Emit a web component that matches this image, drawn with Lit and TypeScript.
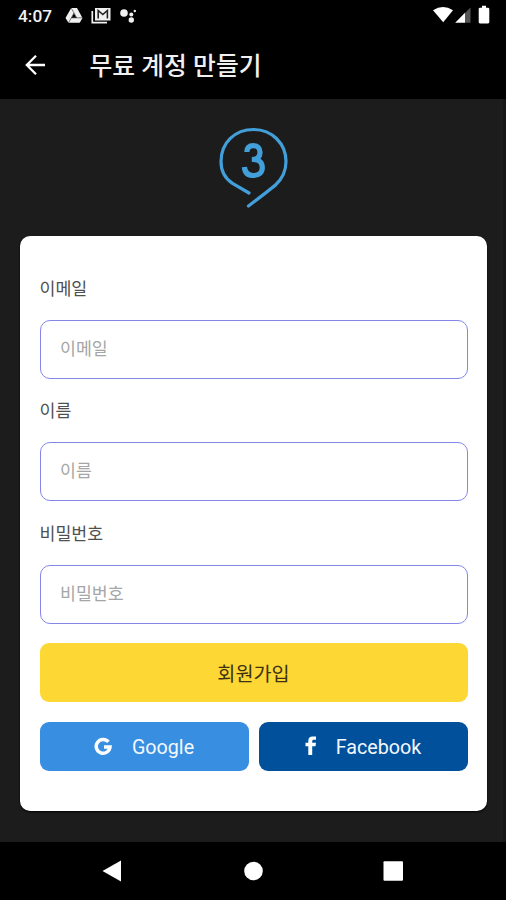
import { LitElement, html, css } from "lit";
import { customElement } from "lit/decorators.js";

const fields = [
  { label: "이메일", type: "email" },
  { label: "이름", type: "text" },
  { label: "비밀번호", type: "password" },
];

@customElement("app-root")
export class AppRoot extends LitElement {
  static styles = css`
    :host {
      display: flex;
      flex-direction: column;
      height: 900px;
      overflow: hidden;
      background: #1c1c1c;
      font-family: Roboto, "Noto Sans CJK KR", sans-serif;
    }
    * { box-sizing: border-box; }
    svg { display: block; flex: none; }
    .status {
      height: 32px;
      flex: none;
      background: #000;
      color: #f2f2f2;
      display: flex;
      justify-content: space-between;
    }
    .status-left { display: flex; padding-left: 18px; }
    .time { width: 47px; font-size: 17.3px; font-weight: 500; line-height: 33px; }
    .appbar {
      height: 67px;
      flex: none;
      background: #000;
      display: flex;
      align-items: center;
      padding-left: 24px;
      gap: 43.5px;
    }
    h1 {
      margin: 0;
      color: #f0f0f0;
      font-size: 24.8px;
      font-weight: 500;
      line-height: 36px;
      white-space: nowrap;
      padding-top: 2px;
    }
    .arrow { margin-bottom: 2px; }
    main {
      flex: 1;
      min-height: 0;
      padding: 27px 16px 0 20px;
      border-right: 3px solid #161616;
    }
    .logo { margin: 0 auto 26px 197px; }
    form {
      height: 575px;
      margin: 0;
      background: #fff;
      border-radius: 10px;
      padding: 38px 19.5px 0;
      box-shadow: 0 1px 2px #000;
    }
    .field { display: block; height: 122.5px; }
    .label { display: block; height: 45.5px; font-size: 17.3px; line-height: 26px; padding-top: 1.5px; color: #505050; }
    input {
      display: block;
      width: 100%;
      height: 59px;
      border: 1.4px solid #8587e8;
      border-radius: 10px;
      background: #fff;
      padding: 0 19.5px 1px;
      font: 17.3px Roboto, "Noto Sans CJK KR", sans-serif;
      outline: none;
    }
    input::placeholder { color: #a6a6a6; opacity: 1; }
    button {
      border: 0;
      padding: 0;
      border-radius: 9px;
      font-family: inherit;
      display: flex;
      align-items: center;
      justify-content: center;
    }
    .submit {
      width: 100%;
      height: 59px;
      margin-top: 1.5px;
      background: #fdd835;
      color: #3c3213;
      font-size: 19.7px;
    }
    .social { display: grid; grid-template-columns: 1fr 1fr; gap: 10px; margin-top: 20px; }
    .social button { height: 49px; color: #f4f8ff; font-size: 19.7px; padding-top: 1px; }
    .google { background: #388ee0; gap: 19px; }
    .google svg { margin-bottom: 2px; }
    .facebook { background: #00509c; gap: 19px; }
    .facebook svg { margin-bottom: 3px; }
    .nav { height: 58px; flex: none; background: #000; }
  `;

  render() {
    return html`
      <div class="status">
        <div class="status-left">
          <span class="time">4:07</span>
          <svg width="75" height="32" viewBox="65 0 75 32" fill="#f0f0f0">
            <path d="M71.200 8h5.800l5.500 10-2.800 4.800H68.500L65.500 18z" />
            <path d="M74 13.500l2.400 4.300H71.600z" fill="#000" />
            <path d="M71.200 8l5.500 9.800M74 13l-5.500 9.800M71.300 17.800h11.200" stroke="#000" stroke-width=".5" fill="none" />
            <path d="M92.300 11v11.700H107" fill="none" stroke="#f0f0f0" stroke-width="1.700" />
            <path d="M95 8h15.500v12.500H95z" />
            <path d="M98.200 18.500v-8l4.600 4 4.600-4v8" fill="none" stroke="#222" stroke-width="1.600" />
            <circle cx="124" cy="13" r="3.800" />
            <circle cx="131.300" cy="14.500" r="2" />
            <circle cx="131.300" cy="20" r="2.700" />
            <circle cx="134.800" cy="11" r="1.200" />
          </svg>
        </div>
        <svg width="86" height="32" viewBox="420 0 86 32" fill="#fff">
          <path d="M433 10.300Q443 3.500 453 10.300L443.200 22.300z" />
          <path d="M470.500 7.500v15.300H465V13z" fill="#555" />
          <path d="M465 12.800v10H455.200z" />
          <path d="M482 7.800v-2h4v2h2q1.300 0 1.300 1.300v13q0 1.300-1.300 1.300h-8q-1.300 0-1.300-1.300v-13q0-1.300 1.300-1.300z" />
        </svg>
      </div>
      <header class="appbar">
        <svg class="arrow" width="22" height="22" viewBox="0 0 22 22" fill="none" stroke="#fff" stroke-width="2.300">
          <path d="M21 11H3M12 1.800L2.800 11 12 20.200" />
        </svg>
        <h1>무료 계정 만들기</h1>
      </header>
      <main>
        <svg class="logo" width="73" height="84" viewBox="217 126 73 84" fill="none" stroke="#429fd9" stroke-linecap="round">
          <path d="M249 193L232.500 183.300C225 178.500 221 170.500 221 161.500C221 142.500 235 129.500 253.500 129.500C272 129.500 286 143.500 286 161.500C286 170.500 282.500 178.500 275.500 185Q273.500 187 248.500 206" stroke-width="3.200" />
          <path d="M246.800 152C247 147.800 249.300 145.700 253.300 145.700C257.500 145.700 260 148 260 152.200C260 156.600 257.500 159.500 251.800 159.500M253.300 159.500C259.300 159.500 262.300 162.800 262.300 167.600C262.300 172.500 259 175.500 253.600 175.500C248 175.500 244.800 172.500 244.400 167" stroke-width="5.200" stroke-linecap="butt" />
        </svg>
        <form>
          ${fields.map(
            (f) => html`<label class="field">
              <span class="label">${f.label}</span>
              <input type=${f.type} placeholder=${f.label} />
            </label>`
          )}
          <button class="submit" type="button">회원가입</button>
          <div class="social">
            <button class="google" type="button">
              <svg width="19" height="19" viewBox="0 0 19 19" fill="none" stroke="#fff" stroke-width="3.500">
                <path d="M14.400 4.900A6.900 6.900 0 1 0 16 9.900H10" />
              </svg>
              Google
            </button>
            <button class="facebook" type="button">
              <svg width="12" height="20" viewBox="0 0 12 20" fill="#fff">
                <path d="M3.300 19V10.300H.5V6.800H3.300V4.700C3.300 1.800 5 .5 7.600.5H11V3.800H9C7.600 3.800 7.200 4.300 7.200 5.400V6.800H11L10.500 10.300H7.200V19z" />
              </svg>
              Facebook
            </button>
          </div>
        </form>
      </main>
      <svg class="nav" width="506" height="58" viewBox="0 842 506 58" fill="#fff">
        <path d="M102.500 871L121 860.500V881.500z" />
        <circle cx="253.500" cy="871" r="9.300" />
        <rect x="383.500" y="861.300" width="19.500" height="19.500" rx="1" />
      </svg>
    `;
  }
}
